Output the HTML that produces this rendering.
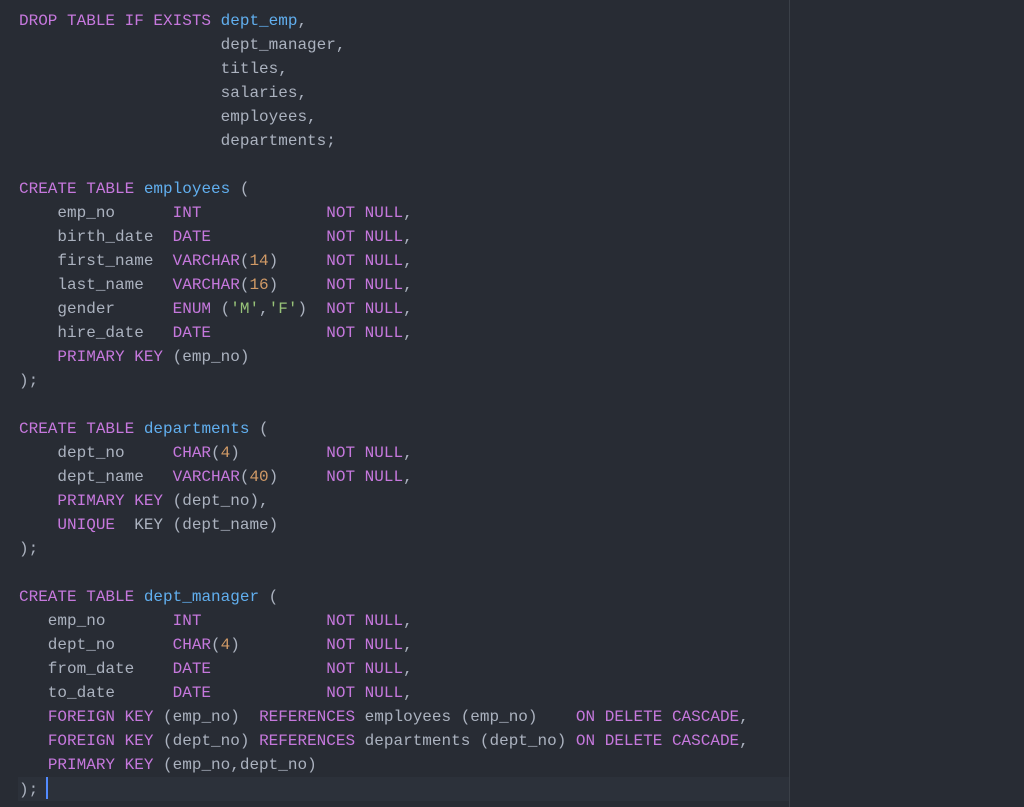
<!DOCTYPE html>
<html><head><style>
html,body{margin:0;padding:0;background:#282c34;width:1024px;height:807px;overflow:hidden}
.v{position:absolute;left:789px;top:0;width:1px;height:807px;background:#3b4048}
.hl{position:absolute;left:18px;top:777px;width:771px;height:24px;background:#2c313a}
pre{position:absolute;left:19px;top:9px;margin:0;font-family:"Liberation Mono",monospace;font-size:16px;line-height:24px;color:#abb2bf}
.k{color:#c678dd}.b{color:#61afef}.n{color:#d19a66}.s{color:#98c379}
.cur{display:inline-block;width:2px;height:22px;background:#528bff;vertical-align:-5px;margin-left:-2px}
</style></head><body>
<div class="hl"></div><div class="v"></div>
<pre><span class="k">DROP TABLE IF EXISTS</span> <span class="b">dept_emp</span>,
                     dept_manager,
                     titles,
                     salaries,
                     employees,
                     departments;

<span class="k">CREATE TABLE</span> <span class="b">employees</span> (
    emp_no      <span class="k">INT</span>             <span class="k">NOT NULL</span>,
    birth_date  <span class="k">DATE</span>            <span class="k">NOT NULL</span>,
    first_name  <span class="k">VARCHAR</span>(<span class="n">14</span>)     <span class="k">NOT NULL</span>,
    last_name   <span class="k">VARCHAR</span>(<span class="n">16</span>)     <span class="k">NOT NULL</span>,
    gender      <span class="k">ENUM</span> (<span class="s">'M'</span>,<span class="s">'F'</span>)  <span class="k">NOT NULL</span>,
    hire_date   <span class="k">DATE</span>            <span class="k">NOT NULL</span>,
    <span class="k">PRIMARY KEY</span> (emp_no)
);

<span class="k">CREATE TABLE</span> <span class="b">departments</span> (
    dept_no     <span class="k">CHAR</span>(<span class="n">4</span>)         <span class="k">NOT NULL</span>,
    dept_name   <span class="k">VARCHAR</span>(<span class="n">40</span>)     <span class="k">NOT NULL</span>,
    <span class="k">PRIMARY KEY</span> (dept_no),
    <span class="k">UNIQUE</span>  KEY (dept_name)
);

<span class="k">CREATE TABLE</span> <span class="b">dept_manager</span> (
   emp_no       <span class="k">INT</span>             <span class="k">NOT NULL</span>,
   dept_no      <span class="k">CHAR</span>(<span class="n">4</span>)         <span class="k">NOT NULL</span>,
   from_date    <span class="k">DATE</span>            <span class="k">NOT NULL</span>,
   to_date      <span class="k">DATE</span>            <span class="k">NOT NULL</span>,
   <span class="k">FOREIGN KEY</span> (emp_no)  <span class="k">REFERENCES</span> employees (emp_no)    <span class="k">ON DELETE CASCADE</span>,
   <span class="k">FOREIGN KEY</span> (dept_no) <span class="k">REFERENCES</span> departments (dept_no) <span class="k">ON DELETE CASCADE</span>,
   <span class="k">PRIMARY KEY</span> (emp_no,dept_no)
); <span class="cur"></span></pre>
</body></html>
